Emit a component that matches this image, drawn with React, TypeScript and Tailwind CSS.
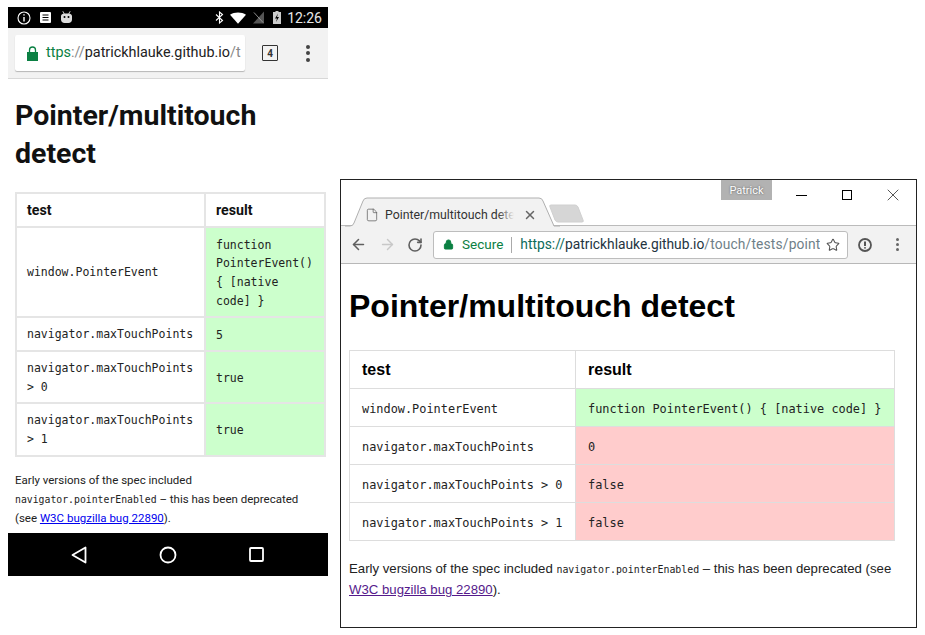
import { ArrowLeft, ArrowRight, RotateCw, Star, Lock, File, X } from "lucide-react";

const roboto = "font-['Roboto',sans-serif]";
const arial = "font-['Liberation_Sans',Arial,sans-serif]";
const mono = "font-['DejaVu_Sans_Mono',monospace]";

const mobileRows = [
  { test: ["window.PointerEvent"], result: ["function", "PointerEvent()", "{ [native", "code] }"], h: "h-[90px]" },
  { test: ["navigator.maxTouchPoints"], result: ["5"], h: "h-[34px]" },
  { test: ["navigator.maxTouchPoints", "> 0"], result: ["true"], h: "h-[52px]" },
  { test: ["navigator.maxTouchPoints", "> 1"], result: ["true"], h: "h-[53px]" },
];

const desktopRows = [
  { test: "window.PointerEvent", result: "function PointerEvent() { [native code] }", ok: true },
  { test: "navigator.maxTouchPoints", result: "0", ok: false },
  { test: "navigator.maxTouchPoints > 0", result: "false", ok: false },
  { test: "navigator.maxTouchPoints > 1", result: "false", ok: false },
];

function PhoneWindow() {
  return (
    <div className={`absolute left-[8px] top-[7px] w-[320px] h-[569px] flex flex-col bg-white ${roboto}`}>
      {/* status bar */}
      <div className="h-[21px] bg-black flex items-center text-white pl-[9px] pr-[6px]">
        <svg width="14" height="14" viewBox="0 0 14 14" fill="none" stroke="white">
          <circle cx="7" cy="7" r="6" strokeWidth="1.1" />
          <path d="M7 6v4.500M7 3.200v1.400" strokeWidth="1.400" />
        </svg>
        <svg width="11" height="11" viewBox="0 0 11 11" className="ml-[9px]">
          <rect x="0" y="0" width="11" height="11" rx="1" fill="white" />
          <path d="M2.500 3h6M2.500 5.500h6M2.500 8h6" stroke="black" strokeWidth="1" />
        </svg>
        <svg width="11" height="13" viewBox="0 0 11 13" className="ml-[10px]" fill="#ddd">
          <path d="M2 0l1.600 2.400h3.800L9 0l.6.4-1.300 2.200c1.600.4 2.700 1.400 2.700 2.600v3.300C11 10.500 9.500 12 7.500 12h-4C1.500 12 0 10.500 0 8.500V5.200c0-1.200 1.100-2.200 2.700-2.600L1.400.4z" />
          <circle cx="3.500" cy="6" r="1" fill="#000" />
          <circle cx="7.500" cy="6" r="1" fill="#000" />
        </svg>
        <div className="ml-auto flex items-center">
          <svg width="9" height="13" viewBox="0 0 9 13" fill="none" stroke="white" strokeWidth="1.100">
            <path d="M1 3.500l6.500 6L4.500 12V1l3 2.500L1 9.500" />
          </svg>
          <svg width="16" height="12" viewBox="0 0 17 12" className="ml-[6px]" fill="white">
            <path d="M0 2.500C4.500-.8 12.500-.8 17 2.500L8.500 12z" />
          </svg>
          <svg width="11" height="13" viewBox="0 0 12 13" className="ml-[7px]">
            <path d="M12 0v13H0z" fill="#555" />
            <path d="M1 1l10 11" stroke="#999" strokeWidth="1" />
          </svg>
          <svg width="8" height="13" viewBox="0 0 8 13" className="ml-[9px]">
            <path d="M2.500 0h3v1H8v12H0V1h2.500z" fill="#ccc" />
            <path d="M5 2.500L2 7.500h2L3 11l3-5H4z" fill="#000" />
          </svg>
          <span className="ml-[6px] text-[14px] leading-none text-[#e8e8e8]">12:26</span>
        </div>
      </div>
      {/* chrome toolbar */}
      <div className="h-[51px] bg-[#f2f2f2] border-b border-[#d8d8d8] flex items-center pl-[7px]">
        <div className="w-[230px] h-[36px] bg-white rounded-[2px] shadow-[0_1px_1px_rgba(0,0,0,0.25)] flex items-center pl-[12px] overflow-hidden text-[14.400px]">
          <svg width="11" height="15" viewBox="0 0 11 15" className="shrink-0 mr-[8px]" fill="#0b8043">
            <path d="M0 6h11v9H0z" />
            <path d="M2.500 6.500V4a3 3 0 0 1 6 0v2.500" fill="none" stroke="#0b8043" strokeWidth="1.300" />
          </svg>
          <span className="whitespace-nowrap">
            <span className="text-[#0b8043]">ttps</span>
            <span className="text-[#888]">://</span>
            <span className="text-[#222]">patrickhlauke.github.io</span>
            <span className="text-[#888]">/t</span>
          </span>
        </div>
        <div className="ml-[17px] w-[16px] h-[16px] border-[1.5px] border-[#333] rounded-[1px] flex items-center justify-center text-[10px] font-bold text-[#333]">
          4
        </div>
        <div className="ml-[28px] flex flex-col gap-[2.500px]">
          <span className="w-[4px] h-[4px] rounded-full bg-[#444]" />
          <span className="w-[4px] h-[4px] rounded-full bg-[#444]" />
          <span className="w-[4px] h-[4px] rounded-full bg-[#444]" />
        </div>
      </div>
      {/* page */}
      <div className="flex-1 pl-[7px] pr-[2px] text-[#111]">
        <h1 className="mt-[18px] text-[28.500px] leading-[38px] font-bold text-[#111]">
          Pointer/multitouch
          <br />
          detect
        </h1>
        <table className="mt-[19px] w-[311px] border-collapse table-fixed">
          <colgroup>
            <col className="w-[189px]" />
            <col />
          </colgroup>
          <thead>
            <tr className="h-[34px] text-left text-[14.200px] font-bold">
              <th className="border-2 border-[#e5e5e5] pl-[10px] pt-[2px]">test</th>
              <th className="border-2 border-[#e5e5e5] pl-[10px] pt-[2px]">result</th>
            </tr>
          </thead>
          <tbody className={`${mono} text-[11.500px] leading-[18.700px] text-[#222]`}>
            {mobileRows.map((row) => (
              <tr key={row.result.join() + row.test.join()} className={row.h}>
                <td className="border-2 border-[#e5e5e5] pl-[10px] pt-[1px]">
                  {row.test.map((line) => (
                    <div key={line}>{line}</div>
                  ))}
                </td>
                <td className="border-2 border-[#e5e5e5] pl-[10px] pt-[2px] bg-[#ccffcc]">
                  {row.result.map((line) => (
                    <div key={line}>{line}</div>
                  ))}
                </td>
              </tr>
            ))}
          </tbody>
        </table>
        <p className="mt-[14px] text-[11.500px] leading-[19px] text-[#222]">
          Early versions of the spec included
          <br />
          <code className={`${mono} text-[9.800px] leading-none`}>navigator.pointerEnabled</code> – this has been deprecated
          <br />
          (see <a className="text-[#0000ee] underline">W3C bugzilla bug 22890</a>).
        </p>
      </div>
      {/* nav bar */}
      <div className="h-[43px] bg-black flex items-center pl-[63px]">
        <svg width="16" height="18" viewBox="0 0 16 18" fill="none" stroke="#fff" strokeWidth="1.800">
          <path d="M14.500 1.500v15L1.500 9z" strokeLinejoin="round" />
        </svg>
        <svg width="18" height="18" viewBox="0 0 18 18" fill="none" stroke="#fff" strokeWidth="1.800" className="ml-[72px]">
          <circle cx="9" cy="9" r="7.500" />
        </svg>
        <svg width="15" height="15" viewBox="0 0 15 15" fill="none" stroke="#fff" strokeWidth="1.800" className="ml-[72px]">
          <rect x="1" y="1" width="13" height="13" rx="1" />
        </svg>
      </div>
    </div>
  );
}

function DesktopWindow() {
  return (
    <div className={`absolute left-[340px] top-[179px] w-[577px] h-[449px] border border-[#222] bg-white flex flex-col ${arial}`}>
      {/* title bar */}
      <div className="relative h-[46px] border-b border-[#bbb] shrink-0">
        <div className={`absolute left-[380px] top-0 w-[51px] h-[20px] bg-[#b2b2b2] text-center text-[11px] leading-[21px] text-white [text-shadow:0_0_2px_#555] ${roboto}`}>
          Patrick
        </div>
        <div className="absolute top-[0px] right-[0px] flex">
          <div className="w-[46px] h-[30px] flex items-center justify-center">
            <span className="w-[11px] h-px bg-black mt-[1px]" />
          </div>
          <div className="w-[46px] h-[30px] flex items-center justify-center">
            <span className="w-[10px] h-[10px] border border-black" />
          </div>
          <div className="w-[46px] h-[30px] flex items-center justify-center">
            <X size={20} strokeWidth={0.8} className="text-black" />
          </div>
        </div>
        {/* active tab and new-tab shape */}
        <svg width="245" height="30" viewBox="0 0 245 30" className="absolute left-[4px] top-[17px]">
          <path d="M0 29h5q3 0 4-3L18 4q1-3 4-3h172q3 0 4 3l11 25h6" fill="#f2f2f2" stroke="#b0b0b0" />
          <path d="M205 10q-1-2 1-2h24q2 0 3 2l5 13q1 2-1 2h-24q-2 0-3-2z" fill="#d6d6d6" stroke="#d0d0d0" />
        </svg>
        <div className="absolute left-[24px] top-[26px] flex items-center w-[172px] text-[12.300px] text-[#333]">
          <File size={14} strokeWidth={1.200} className="shrink-0 text-[#555]" />
          <div className="relative ml-[6px] w-[130px] overflow-hidden">
            <span className={`whitespace-nowrap ${roboto}`}>Pointer/multitouch detect</span>
            <span className="absolute right-0 top-0 bottom-0 w-[16px] bg-gradient-to-r from-transparent to-[#f2f2f2]" />
          </div>
          <X size={14} strokeWidth={2.500} className="ml-[9px] shrink-0 text-[#666]" />
        </div>
      </div>
      {/* toolbar */}
      <div className="h-[38px] shrink-0 bg-[#f2f2f2] border-b border-[#b8b8b8] flex items-center pl-[9px]">
        <ArrowLeft size={17} strokeWidth={2.200} className="text-[#5f5f5f]" />
        <ArrowRight size={17} strokeWidth={2} className="ml-[12px] text-[#c8c8c8]" />
        <RotateCw size={16} strokeWidth={2.400} className="ml-[11px] text-[#5f5f5f]" />
        <div className="ml-[10px] w-[415px] h-[28px] bg-white border border-[#bdbdbd] rounded-[3px] flex items-center pl-[9px] pr-[7px] text-[13.500px] overflow-hidden">
          <Lock size={11} fill="#0b8043" strokeWidth={2} className="shrink-0 text-[#0b8043]" />
          <span className={`ml-[8px] text-[#0b8043] ${roboto}`}>Secure</span>
          <span className="mx-[8px] w-px h-[16px] bg-[#aaa]" />
          <span className={`whitespace-nowrap w-[300px] overflow-hidden text-[13.800px] ${roboto}`}>
            <span className="text-[#0b6b5a]">https://</span>
            <span className="text-[#24343f]">patrickhlauke.github.io</span>
            <span className="text-[#6f7f88] tracking-[0.15px]">/touch/tests/pointer</span>
          </span>
          <Star size={14} strokeWidth={1.800} className="ml-auto shrink-0 text-[#555]" />
        </div>
        <svg width="14" height="14" viewBox="0 0 14 14" fill="none" stroke="#555" className="ml-[10px]">
          <circle cx="7" cy="7" r="6" strokeWidth="1.800" />
          <path d="M7 3.500v4.500M7 9.200v1.300" strokeWidth="2" />
        </svg>
        <div className="ml-[24px] flex flex-col gap-[2px]">
          <span className="w-[3px] h-[3px] rounded-full bg-[#666]" />
          <span className="w-[3px] h-[3px] rounded-full bg-[#666]" />
          <span className="w-[3px] h-[3px] rounded-full bg-[#666]" />
        </div>
      </div>
      {/* page */}
      <div className="flex-1 pl-[8px] text-[#111]">
        <h1 className="mt-[24px] text-[32px] leading-[37px] font-bold text-black">Pointer/multitouch detect</h1>
        <table className="mt-[25px] w-[546px] border-collapse table-fixed">
          <colgroup>
            <col className="w-[226px]" />
            <col />
          </colgroup>
          <thead>
            <tr className="h-[38px] text-left text-[16px] font-bold text-black">
              <th className="border border-[#ddd] pl-[12px]">test</th>
              <th className="border border-[#ddd] pl-[12px]">result</th>
            </tr>
          </thead>
          <tbody className={`${mono} text-[11.900px] text-[#222]`}>
            {desktopRows.map((row) => (
              <tr key={row.test} className="h-[38px]">
                <td className="border border-[#ddd] pl-[12px] pt-[4px]">{row.test}</td>
                <td className={`border border-[#ddd] pl-[12px] pt-[4px] ${row.ok ? "bg-[#ccffcc]" : "bg-[#ffcccc]"}`}>{row.result}</td>
              </tr>
            ))}
          </tbody>
        </table>
        <p className="mt-[17px] text-[13.200px] leading-[21px] text-[#222] w-[550px]">
          Early versions of the spec included <code className={`${mono} text-[9.900px] leading-none`}>navigator.pointerEnabled</code> – this has been deprecated (see{" "}
          <a className="text-[#551a8b] underline">W3C bugzilla bug 22890</a>).
        </p>
      </div>
    </div>
  );
}

export default function App() {
  return (
    <div className="relative w-[925px] h-[635px] bg-white overflow-hidden">
      <PhoneWindow />
      <DesktopWindow />
    </div>
  );
}
